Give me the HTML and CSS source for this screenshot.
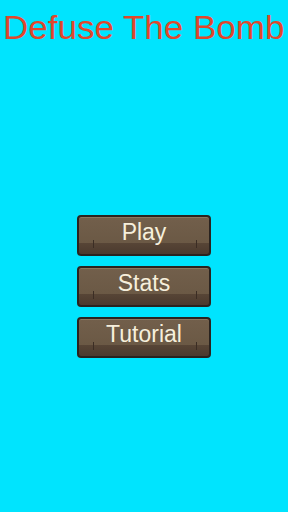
FILE: index.html
```html
<!doctype html>
<html lang="en">
<head>
	<meta charset="UTF-8">
	<title>Defuse The Bomb</title>
	<link rel="stylesheet" href="styles.css">
</head>
<body>
	<div id="wrap">
		<div class="head">
			<h1 class="title">Defuse The Bomb</h1>
		</div>
		<div class="menu">
			<button class="btn">Play</button>
			<button class="btn">Stats</button>
			<button class="btn">Tutorial</button>
		</div>
	</div>
</body>
</html>
```

FILE: styles.css
```css
*{
	padding:0;
	margin:0;
	box-sizing:border-box;
}
html,body{
	height:100%;
}
body{
	background:#00e4fe;
	font-family:"Liberation Sans", Arial, sans-serif;
}
#wrap{
	width:288px;
	height:512px;
	overflow:hidden;
}
.head{
	text-align:center;
	padding-top:10px;
	height:44px;
}
.title{
	display:inline-block;
	font-weight:normal;
	font-size:33px;
	line-height:36px;
	color:#e0472b;
	white-space:nowrap;
	transform:scaleX(1.06);
}
.menu{
	display:flex;
	flex-direction:column;
	align-items:center;
	gap:10px;
	margin-top:171px;
}
.btn{
	position:relative;
	width:134px;
	height:41px;
	border:2px solid #2a231f;
	border-radius:4px;
	background:linear-gradient(#725f4b 0, #6b5945 26px, #574536 26px, #4b3a2e 100%);
	box-shadow:inset 0 1px 0 #8a775f;
	color:#f6efdc;
	font-family:"Liberation Sans", Arial, sans-serif;
	font-size:23px;
	line-height:1;
	padding-bottom:6px;
}
.btn::before,
.btn::after{
	content:"";
	position:absolute;
	bottom:6px;
	width:1px;
	height:8px;
	background:#3b2d24;
}
.btn::before{
	left:14px;
}
.btn::after{
	right:12px;
}
```
